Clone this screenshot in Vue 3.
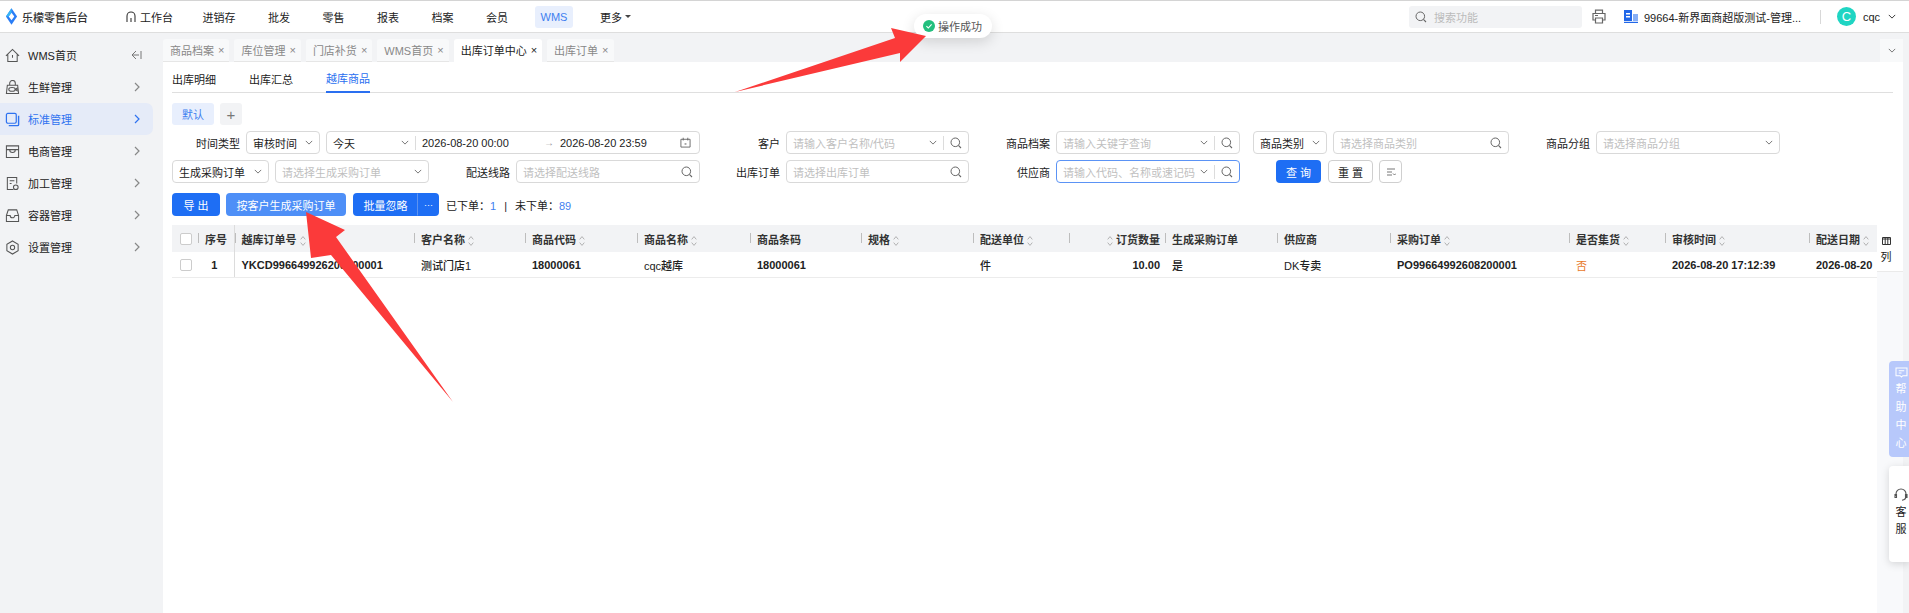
<template>
  <div class="page">
    <svg class="defs" width="0" height="0">
      <symbol id="i-search" viewBox="0 0 12 12">
        <circle cx="5.3" cy="5.3" r="4.3" fill="none" stroke="currentColor" stroke-width="1" />
        <path d="M8.4 8.4 11 11" fill="none" stroke="currentColor" stroke-width="1.1" />
      </symbol>
      <symbol id="i-down" viewBox="0 0 10 6">
        <path d="M1 1l4 4 4-4" fill="none" stroke="currentColor" stroke-width="1.1" />
      </symbol>
      <symbol id="i-right" viewBox="0 0 6 10">
        <path d="M1 1l4 4-4 4" fill="none" stroke="currentColor" stroke-width="1.2" />
      </symbol>
      <symbol id="i-sort" viewBox="0 0 6 12">
        <path d="M.7 4.4 3 1.6l2.3 2.8M.7 7.6 3 10.4l2.3-2.8" fill="none" stroke="currentColor" stroke-width=".9" />
      </symbol>
    </svg>

    <header class="topbar">
      <div class="brand">
        <svg class="brand-logo" viewBox="0 0 14 18" width="13" height="17">
          <path d="M7 0 13 9 7 18 1 9z" fill="#2a7df6" />
          <path d="M7 5 10 9 7 13 4 9z" fill="#fff" />
          <path d="M7 0 1 9 4 9 7 5z" fill="#38b6f5" />
        </svg>
        <span>乐檬零售后台</span>
      </div>
      <nav class="nav">
        <a class="nav-item nav-first">
          <svg viewBox="0 0 10 12" width="10" height="12">
            <path d="M1 11V5a4 4 0 0 1 8 0v6M5 7v4" fill="none" stroke="#333" stroke-width="1.1" />
          </svg>
          工作台
        </a>
        <a v-for="item in navItems" :key="item" class="nav-item" :class="{ active: item === 'WMS' }">{{ item }}</a>
        <a class="nav-item">更多<i class="caret"></i></a>
      </nav>
      <div class="top-right">
        <div class="top-search">
          <svg class="ico12"><use href="#i-search" /></svg>
          <span>搜索功能</span>
        </div>
        <svg class="printer" viewBox="0 0 14 15" width="14" height="15">
          <path d="M3.5 4V1.2h7V4M3.5 11H1V4.5h12V11h-2.500M3.500 9h7v5h-7z" fill="none" stroke="#666" stroke-width="1.2" />
          <path d="M3 6.500h3" stroke="#666" stroke-width="1" />
        </svg>
        <svg class="shop" viewBox="0 0 14 13" width="14" height="13">
          <path d="M0 0h8v11H0z" fill="#2167e8" />
          <path d="M9 4h5v7H9z" fill="#86aef5" />
          <path d="M2 3h4v1.500H2zM2 6h4v1.500H2z" fill="#fff" />
          <path d="M0 11.800h14V13H0z" fill="#2167e8" />
        </svg>
        <span class="shop-name">99664-新界面商超版测试-管理...</span>
        <i class="top-sep"></i>
        <span class="avatar">C</span>
        <span class="user">cqc</span>
        <svg class="user-down"><use href="#i-down" /></svg>
      </div>
    </header>

    <div class="body">
      <aside class="sidebar">
        <div v-for="(m, i) in menus" :key="m" class="menu" :class="{ on: i === 2 }">
          <svg class="menu-ico" viewBox="0 0 16 16" fill="none" stroke="currentColor" stroke-width="1.1">
            <template v-if="i === 0">
              <path d="M1 8.500 8 1.500l7 7M3 7v7.500h10V7M8 7.500v3" />
            </template>
            <template v-else-if="i === 1">
              <path d="M2.500 5.500h11l1 9h-13zM5 5.500V3.500a3 3 0 0 1 6 0v2" />
              <ellipse cx="7.500" cy="10" rx="3.500" ry="2" />
              <path d="M11 10l2-1.500v3z" />
            </template>
            <template v-else-if="i === 2">
              <rect x="1.500" y="1.500" width="10.500" height="10.500" rx="1.500" stroke-width="1.300" />
              <path d="M4 14.500h9.500a1 1 0 0 0 1-1V4" stroke-width="1.500" />
            </template>
            <template v-else-if="i === 3">
              <path d="M1.500 2h13v12.500h-13zM1.500 6h13M5 6a3 3 0 0 0 6 0" />
            </template>
            <template v-else-if="i === 4">
              <path d="M9 14.500H2.500V1.500h10V8M5 5h5M5 8h2" />
              <circle cx="11.500" cy="12" r="2.500" />
            </template>
            <template v-else-if="i === 5">
              <path d="M1.500 8 3.500 2h9l2 6v6.500h-13zM1.500 8h4a2.500 2.500 0 0 0 5 0h4" />
            </template>
            <template v-else>
              <path d="M8 1l6 3.500v7L8 15l-6-3.500v-7z" />
              <circle cx="8" cy="8" r="2.300" />
            </template>
          </svg>
          <span>{{ m }}</span>
          <svg v-if="i === 0" class="collapse" viewBox="0 0 11 10">
            <path d="M5 1 1 5l4 4M1 5h7M10 1v8" fill="none" stroke="#777" stroke-width="1" />
          </svg>
          <svg v-else class="menu-arrow"><use href="#i-right" /></svg>
        </div>
      </aside>

      <main class="main">
        <div class="tabs">
          <div v-for="t in tabs" :key="t" class="tab" :class="{ current: t === '出库订单中心' }">
            {{ t }}<em>×</em>
          </div>
          <div class="tabs-more"><svg class="ico-down"><use href="#i-down" /></svg></div>
        </div>

        <section class="content">
          <div class="subtabs">
            <a>出库明细</a>
            <a>出库汇总</a>
            <a class="cur">越库商品</a>
          </div>

          <div class="presets">
            <span class="preset">默认</span>
            <span class="preset-add">+</span>
          </div>

          <div class="row">
            <label class="lb lb-first">时间类型</label>
            <div class="box sel w74"><span>审核时间</span><svg class="ico-down"><use href="#i-down" /></svg></div>
            <div class="box date">
              <span class="date-kind">今天<svg class="ico-down"><use href="#i-down" /></svg></span>
              <i class="vsep"></i>
              <span class="date-start">2026-08-20 00:00</span>
              <span class="date-arrow">→</span>
              <span>2026-08-20 23:59</span>
              <svg class="cal" viewBox="0 0 12 12" width="11" height="11">
                <path d="M1 2.500h10V11H1zM3.500 .8v3M8.500 .8v3" fill="none" stroke="#666" stroke-width="1" />
                <path d="M5 7h2v1.200H5z" fill="#666" />
              </svg>
            </div>
            <label class="lb lb-80">客户</label>
            <div class="box w183">
              <span class="ph">请输入客户名称/代码</span>
              <svg class="ico-down push"><use href="#i-down" /></svg>
              <i class="vsep"></i>
              <svg class="ico12"><use href="#i-search" /></svg>
            </div>
            <label class="lb">商品档案</label>
            <div class="box w184">
              <span class="ph">请输入关键字查询</span>
              <svg class="ico-down push"><use href="#i-down" /></svg>
              <i class="vsep"></i>
              <svg class="ico12"><use href="#i-search" /></svg>
            </div>
            <div class="box sel w74 gap-left"><span>商品类别</span><svg class="ico-down"><use href="#i-down" /></svg></div>
            <div class="box w176">
              <span class="ph">请选择商品类别</span>
              <svg class="ico12 push"><use href="#i-search" /></svg>
            </div>
            <label class="lb">商品分组</label>
            <div class="box sel w184"><span class="ph">请选择商品分组</span><svg class="ico-down"><use href="#i-down" /></svg></div>
          </div>

          <div class="row row-two">
            <div class="box sel w97"><span>生成采购订单</span><svg class="ico-down"><use href="#i-down" /></svg></div>
            <div class="box sel w154"><span class="ph">请选择生成采购订单</span><svg class="ico-down"><use href="#i-down" /></svg></div>
            <label class="lb">配送线路</label>
            <div class="box w184">
              <span class="ph">请选择配送线路</span>
              <svg class="ico12 push"><use href="#i-search" /></svg>
            </div>
            <label class="lb lb-80">出库订单</label>
            <div class="box w183">
              <span class="ph">请选择出库订单</span>
              <svg class="ico12 push"><use href="#i-search" /></svg>
            </div>
            <label class="lb">供应商</label>
            <div class="box w184 focus">
              <span class="ph clip">请输入代码、名称或速记码</span>
              <svg class="ico-down push"><use href="#i-down" /></svg>
              <i class="vsep"></i>
              <svg class="ico12"><use href="#i-search" /></svg>
            </div>
            <button class="btn primary query">查 询</button>
            <button class="btn plain reset">重 置</button>
            <button class="btn plain icon-btn">
              <svg viewBox="0 0 10 10" width="10" height="10">
                <path d="M1 2h8M1 5h5M1 8h5M7 6.500l1.500 1.500L10 6.500" fill="none" stroke="#666" stroke-width=".9" />
              </svg>
            </button>
          </div>

          <div class="actions">
            <button class="btn primary export">导 出</button>
            <button class="btn light">按客户生成采购订单</button>
            <div class="split">
              <button class="btn primary ignore">批量忽略</button>
              <button class="btn primary more">···</button>
            </div>
            <span class="count">已下单：<b>1</b><i>|</i>未下单：<b>89</b></span>
          </div>

          <div class="table-area">
            <div class="table-wrap">
              <table>
                <colgroup>
                  <col v-for="c in columns" :key="c.title" :style="{ width: c.width + 'px' }" />
                </colgroup>
                <thead>
                  <tr>
                    <th v-for="(c, i) in columns" :key="c.title" :class="{ fixed: i === 1, first: i === 0, right: c.right }">
                      <span v-if="i === 0" class="check"></span>
                      <template v-else>
                        <svg v-if="c.sort && c.right" class="sort"><use href="#i-sort" /></svg>
                        {{ c.label }}
                        <svg v-if="c.sort && !c.right" class="sort"><use href="#i-sort" /></svg>
                      </template>
                    </th>
                  </tr>
                </thead>
                <tbody>
                  <tr>
                    <td
                      v-for="(c, i) in columns"
                      :key="c.title"
                      :class="{ fixed: i === 1, seq: i === 1, first: i === 0, right: c.right, cjk: c.cjk, warn: c.title === 'collect' }"
                    >
                      <span v-if="i === 0" class="check"></span>
                      <template v-else>{{ c.value }}</template>
                    </td>
                  </tr>
                </tbody>
              </table>
            </div>
            <div class="col-strip">
              <div class="col-btn">
                <svg viewBox="0 0 9 8" width="9" height="8">
                  <path d="M.5.500h8v7h-8zM3.200.500v7M5.800.500v7M.5 2h8" fill="none" stroke="#333" stroke-width="1" />
                </svg>
                <span>列</span>
              </div>
            </div>
          </div>
        </section>
      </main>
    </div>

    <!-- floating stuff over the page -->
    <div class="toast">
      <svg viewBox="0 0 12 12" width="12" height="12">
        <circle cx="6" cy="6" r="6" fill="#22bf7d" />
        <path d="M3.400 6.200 5.300 8l3.300-3.600" fill="none" stroke="#fff" stroke-width="1.100" />
      </svg>
      <span>操作成功</span>
    </div>

    <div class="help">
      <svg class="help-ico" viewBox="0 0 14 12" width="13" height="11">
        <path d="M1 1h12v8.500H8.500L7 11 5.500 9.500H1zM4 4h6M4 6.500h3" fill="none" stroke="#fff" stroke-width="1.1" />
      </svg>
      <span>帮</span><span>助</span><span>中</span><span>心</span>
    </div>
    <div class="service">
      <svg viewBox="0 0 14 14" width="14" height="14">
        <path d="M2 8V6a5 5 0 0 1 10 0v2M12 8c0 2.500-1.500 4-4 4.200M1 6.500h1.500v3H1zM11.500 6.500H13v3h-1.500z" fill="none" stroke="#555" stroke-width="1.100" />
      </svg>
      <span>客</span><span>服</span>
    </div>

    <svg class="arrows" viewBox="0 0 1909 613" width="1909" height="613">
      <polygon points="735,92 895,38 891,28 926,36 900,62 900,53" fill="#fb3a3a" />
      <polygon points="306,212 345,230 336,237 453,402 331,255 311,258" fill="#fb3a3a" />
    </svg>
  </div>
</template>

<script setup>
const navItems = ["进销存", "批发", "零售", "报表", "档案", "会员", "WMS"];

const menus = ["WMS首页", "生鲜管理", "标准管理", "电商管理", "加工管理", "容器管理", "设置管理"];

const tabs = ["商品档案", "库位管理", "门店补货", "WMS首页", "出库订单中心", "出库订单"];

const columns = [
  { title: "check", label: "", width: 26 },
  { title: "seq", label: "序号", width: 36, value: "1" },
  { title: "order", label: "越库订单号", width: 180, sort: true, value: "YKCD996649926208200001" },
  { title: "customer", label: "客户名称", width: 111, sort: true, cjk: true, value: "测试门店1" },
  { title: "code", label: "商品代码", width: 112, sort: true, value: "18000061" },
  { title: "name", label: "商品名称", width: 113, sort: true, cjk: true, value: "cqc越库" },
  { title: "barcode", label: "商品条码", width: 111, value: "18000061" },
  { title: "spec", label: "规格", width: 112, sort: true, value: "" },
  { title: "unit", label: "配送单位", width: 96, sort: true, cjk: true, value: "件" },
  { title: "qty", label: "订货数量", width: 96, sort: true, right: true, value: "10.00" },
  { title: "gen", label: "生成采购订单", width: 112, cjk: true, value: "是" },
  { title: "supplier", label: "供应商", width: 113, cjk: true, value: "DK专卖" },
  { title: "po", label: "采购订单", width: 179, sort: true, value: "PO99664992608200001" },
  { title: "collect", label: "是否集货", width: 96, sort: true, value: "否" },
  { title: "audit", label: "审核时间", width: 144, sort: true, value: "2026-08-20 17:12:39" },
  { title: "date", label: "配送日期", width: 112, sort: true, value: "2026-08-20" },
];
</script>

<style>
html,
body {
  margin: 0;
  background: #fff;
}
</style>

<style scoped>
.page {
  position: relative;
  display: flex;
  flex-direction: column;
  width: 1909px;
  height: 613px;
  overflow: hidden;
  font-family: "Liberation Sans", "Noto Sans CJK SC", sans-serif;
  font-size: 11px;
  color: #333;
  background: #f2f3f5;
}
.defs {
  position: absolute;
}
.ico12 {
  width: 12px;
  height: 12px;
  color: #666;
  flex: none;
}
.ico-down {
  width: 8px;
  height: 5px;
  color: #666;
  flex: none;
}
.push {
  margin-left: auto;
}

/* top bar */
.topbar {
  display: flex;
  align-items: center;
  border-top: 1px solid #d4d4d4;
  border-bottom: 1px solid #dedede;
  box-sizing: border-box;
  height: 33px;
  background: #fff;
  flex: none;
}
.brand {
  display: flex;
  align-items: center;
  width: 120px;
  padding-left: 5px;
  box-sizing: border-box;
  gap: 4px;
  font-weight: 500;
  color: #333;
}
.nav {
  display: flex;
  align-items: center;
  gap: 20.5px;
}
.nav-item {
  display: flex;
  align-items: center;
  height: 22px;
  padding: 0 6px;
  border-radius: 3px;
  color: #222;
}
.nav-first {
  gap: 4px;
  margin-right: -3px;
}
.nav-item.active {
  background: #e8effd;
  color: #3f7ff0;
}
.caret {
  margin-left: 3px;
  border: 3px solid transparent;
  border-top-color: #444;
  border-bottom: 0;
}
.top-right {
  display: flex;
  align-items: center;
  margin-left: auto;
}
.top-search {
  display: flex;
  align-items: center;
  gap: 7px;
  width: 173px;
  height: 22px;
  padding-left: 6px;
  box-sizing: border-box;
  border-radius: 3px;
  background: #f2f3f5;
  color: #bbb;
}
.printer {
  margin-left: 10px;
}
.shop {
  margin-left: 18px;
}
.shop-name {
  margin-left: 6px;
  width: 158px;
  white-space: nowrap;
  color: #222;
}
.top-sep {
  width: 1px;
  height: 14px;
  margin-left: 18px;
  background: #d8d8d8;
}
.avatar {
  display: flex;
  align-items: center;
  justify-content: center;
  width: 19px;
  height: 19px;
  margin-left: 16px;
  border-radius: 50%;
  background: #1fd5c3;
  color: #fff;
  font-size: 13px;
}
.user {
  margin-left: 7px;
  width: 17px;
  color: #222;
}
.user-down {
  width: 8px;
  height: 5px;
  margin-left: 8px;
  margin-right: 13px;
  color: #222;
}

/* sidebar */
.body {
  display: flex;
  flex: 1;
  min-height: 0;
}
.sidebar {
  width: 163px;
  flex: none;
  padding-top: 6px;
  box-sizing: border-box;
  background: #f2f3f5;
}
.menu {
  display: flex;
  align-items: center;
  width: 153px;
  height: 32px;
  padding-left: 5px;
  box-sizing: border-box;
  border-radius: 0 7px 7px 0;
  color: #222;
  position: relative;
}
.menu-ico {
  width: 15px;
  height: 15px;
  margin-right: 8px;
  color: #555;
}
.menu.on {
  background: #e5ebf8;
  color: #2f73f0;
}
.menu.on .menu-ico,
.menu.on .menu-arrow {
  color: #2f73f0;
}
.menu-arrow {
  width: 6px;
  height: 10px;
  color: #888;
  margin-left: auto;
  margin-right: 13px;
}
.collapse {
  width: 11px;
  height: 10px;
  margin-left: auto;
  margin-right: 11px;
}

/* tabs */
.main {
  display: flex;
  flex-direction: column;
  flex: 1;
  min-width: 0;
  padding-right: 6px;
}
.tabs {
  display: flex;
  gap: 5px;
  height: 29px;
  padding-top: 6px;
  box-sizing: border-box;
  flex: none;
}
.tab {
  display: flex;
  align-items: center;
  height: 23px;
  padding: 0 5px 0 7px;
  box-sizing: border-box;
  border-radius: 3px 3px 0 0;
  background: #f8f9fa;
  border-bottom: 1px solid #e6e6e6;
  color: #888;
  white-space: nowrap;
}
.tab em {
  margin-left: 4px;
  font-style: normal;
  font-size: 11px;
  color: #888;
}
.tab.current {
  background: #fff;
  border-bottom-color: #fff;
  color: #222;
}
.tab.current em {
  color: #222;
}
.tabs-more {
  display: flex;
  align-items: center;
  justify-content: center;
  width: 23px;
  height: 23px;
  margin-left: auto;
  background: #f8f9fa;
}

/* content */
.content {
  display: flex;
  flex-direction: column;
  flex: 1;
  min-height: 0;
  padding-left: 9px;
  background: #fff;
}
.subtabs {
  display: flex;
  gap: 33px;
  height: 31px;
  margin-right: 10px;
  border-bottom: 1px solid #dfdfdf;
  box-sizing: border-box;
  flex: none;
}
.subtabs a {
  display: flex;
  align-items: center;
  height: 31px;
  padding-top: 3px;
  box-sizing: border-box;
  color: #222;
}
.subtabs a.cur {
  color: #2a6ff0;
  border-bottom: 2px solid #2a6ff0;
}
.presets {
  display: flex;
  gap: 6px;
  margin-top: 10px;
  flex: none;
}
.preset,
.preset-add {
  display: flex;
  align-items: center;
  justify-content: center;
  height: 22px;
  border-radius: 3px;
}
.preset {
  width: 42px;
  background: #e8effd;
  color: #3f7ff0;
}
.preset-add {
  width: 22px;
  background: #f2f3f5;
  color: #777;
  font-size: 15px;
}

/* filter rows */
.row {
  display: flex;
  align-items: center;
  height: 23px;
  margin-top: 6px;
  flex: none;
}
.lb {
  width: 81px;
  margin-right: 6px;
  text-align: right;
  color: #222;
  flex: none;
}
.lb-80 {
  width: 80px;
}
.lb-first {
  width: 68px;
}
.box {
  display: flex;
  align-items: center;
  height: 23px;
  padding: 0 6px;
  box-sizing: border-box;
  border: 1px solid #d9d9d9;
  border-radius: 4px;
  background: #fff;
  color: #222;
  white-space: nowrap;
  flex: none;
}
.box + .box {
  margin-left: 6px;
}
.box.gap-left {
  margin-left: 13px;
}
.sel {
  justify-content: space-between;
}
.ph {
  color: #bfbfbf;
}
.clip {
  width: 143px;
  overflow: hidden;
}
.focus {
  border-color: #5b93f5;
}
.vsep {
  width: 1px;
  height: 14px;
  margin: 0 6px;
  background: #dcdcdc;
  flex: none;
}
.w74 {
  width: 74px;
}
.w97 {
  width: 97px;
}
.w154 {
  width: 154px;
}
.w176 {
  width: 176px;
}
.w183 {
  width: 183px;
}
.w184 {
  width: 184px;
}
.date {
  width: 374px;
}
.date-kind {
  display: flex;
  align-items: center;
  justify-content: space-between;
  width: 76px;
}
.date-start {
  width: 122px;
}
.date-arrow {
  width: 16px;
  color: #999;
  font-size: 10px;
}
.cal {
  margin-left: auto;
  margin-right: 2px;
}

/* buttons */
.btn {
  height: 23px;
  padding: 0;
  border: 1px solid transparent;
  border-radius: 4px;
  font: inherit;
  white-space: nowrap;
}
.primary {
  background: #1e6ef4;
  color: #fff;
}
.light {
  width: 120px;
  background: #4e8ff7;
  color: #fff;
}
.plain {
  background: #fff;
  border-color: #cfcfcf;
  color: #222;
}
.query {
  width: 45px;
  margin-left: 36px;
}
.reset {
  width: 45px;
  margin-left: 7px;
}
.icon-btn {
  display: flex;
  align-items: center;
  justify-content: center;
  width: 23px;
  margin-left: 6px;
}
.actions {
  display: flex;
  align-items: center;
  gap: 6px;
  margin-top: 10px;
  flex: none;
}
.export {
  width: 48px;
}
.split {
  display: flex;
  margin-left: 1px;
}
.ignore {
  width: 65px;
  border-radius: 4px 0 0 4px;
  border-right-color: #5d93f0;
}
.more {
  width: 21px;
  border-radius: 0 4px 4px 0;
  font-size: 9px;
}
.count {
  margin-left: 1px;
  color: #222;
}
.count b {
  font-weight: 400;
  color: #3f7ff0;
}
.count i {
  margin: 0 8px;
  font-style: normal;
}

/* table */
.table-area {
  display: flex;
  flex: 1;
  min-height: 0;
  margin-top: 9px;
}
.table-wrap {
  width: 1705px;
  overflow: hidden;
  flex: none;
}
table {
  width: 1749px;
  table-layout: fixed;
  border-collapse: collapse;
}
th {
  position: relative;
  height: 27px;
  padding: 0 0 0 7px;
  background: #f2f3f5;
  font-weight: 700;
  text-align: left;
  color: #333;
  white-space: nowrap;
}
th::before {
  content: "";
  position: absolute;
  left: 0;
  top: 8px;
  height: 10px;
  width: 1px;
  background: #bdbdbd;
}
th.first::before {
  display: none;
}
td {
  height: 25px;
  padding: 0 0 0 7px;
  border-bottom: 1px solid #ececec;
  color: #222;
  font-weight: 700;
  white-space: nowrap;
}
td.cjk {
  font-weight: 500;
}
.fixed {
  border-right: 1px solid #dcdcdc;
}
td.seq {
  text-align: center;
  padding: 0 3px 0 0;
}
.first {
  padding-left: 8px;
}
th.right,
td.right {
  padding-right: 5px;
  text-align: right;
}
td.warn {
  color: #e8792a;
  font-weight: 400;
}
.check {
  display: block;
  width: 10px;
  height: 10px;
  border: 1px solid #ccc;
  border-radius: 2px;
  background: #fff;
}
.sort {
  width: 6px;
  height: 12px;
  color: #aaa;
  vertical-align: -3px;
}
.col-strip {
  flex: 1;
  background: #f8f9fb;
}
.col-btn {
  display: flex;
  flex-direction: column;
  align-items: center;
  gap: 3px;
  height: 47px;
  padding: 12px 8px 0 0;
  box-sizing: border-box;
  background: #fff;
  border-bottom: 1px solid #eaeaea;
  color: #222;
}

/* overlays */
.toast {
  position: absolute;
  left: 914px;
  top: 14px;
  display: flex;
  align-items: center;
  gap: 3px;
  width: 78px;
  height: 24px;
  padding-left: 9px;
  box-sizing: border-box;
  border-radius: 12px;
  background: #fff;
  box-shadow: 0 4px 14px rgba(0, 0, 0, 0.14);
  color: #555;
}
.help {
  position: absolute;
  left: 1889px;
  top: 361px;
  display: flex;
  flex-direction: column;
  align-items: center;
  gap: 5px;
  width: 20px;
  height: 96px;
  padding: 6px 0 0 4px;
  box-sizing: border-box;
  border-radius: 4px 0 0 4px;
  background: #b7c8fb;
  color: #fff;
  line-height: 13px;
}
.help-ico {
  flex: none;
}
.service {
  position: absolute;
  left: 1889px;
  top: 466px;
  display: flex;
  flex-direction: column;
  align-items: center;
  gap: 4px;
  width: 20px;
  height: 96px;
  padding: 22px 0 0 4px;
  box-sizing: border-box;
  border-radius: 4px 0 0 4px;
  background: #fff;
  box-shadow: 0 2px 8px rgba(0, 0, 0, 0.15);
  color: #222;
  line-height: 13px;
}
.arrows {
  position: absolute;
  left: 0;
  top: 0;
  pointer-events: none;
}
</style>
